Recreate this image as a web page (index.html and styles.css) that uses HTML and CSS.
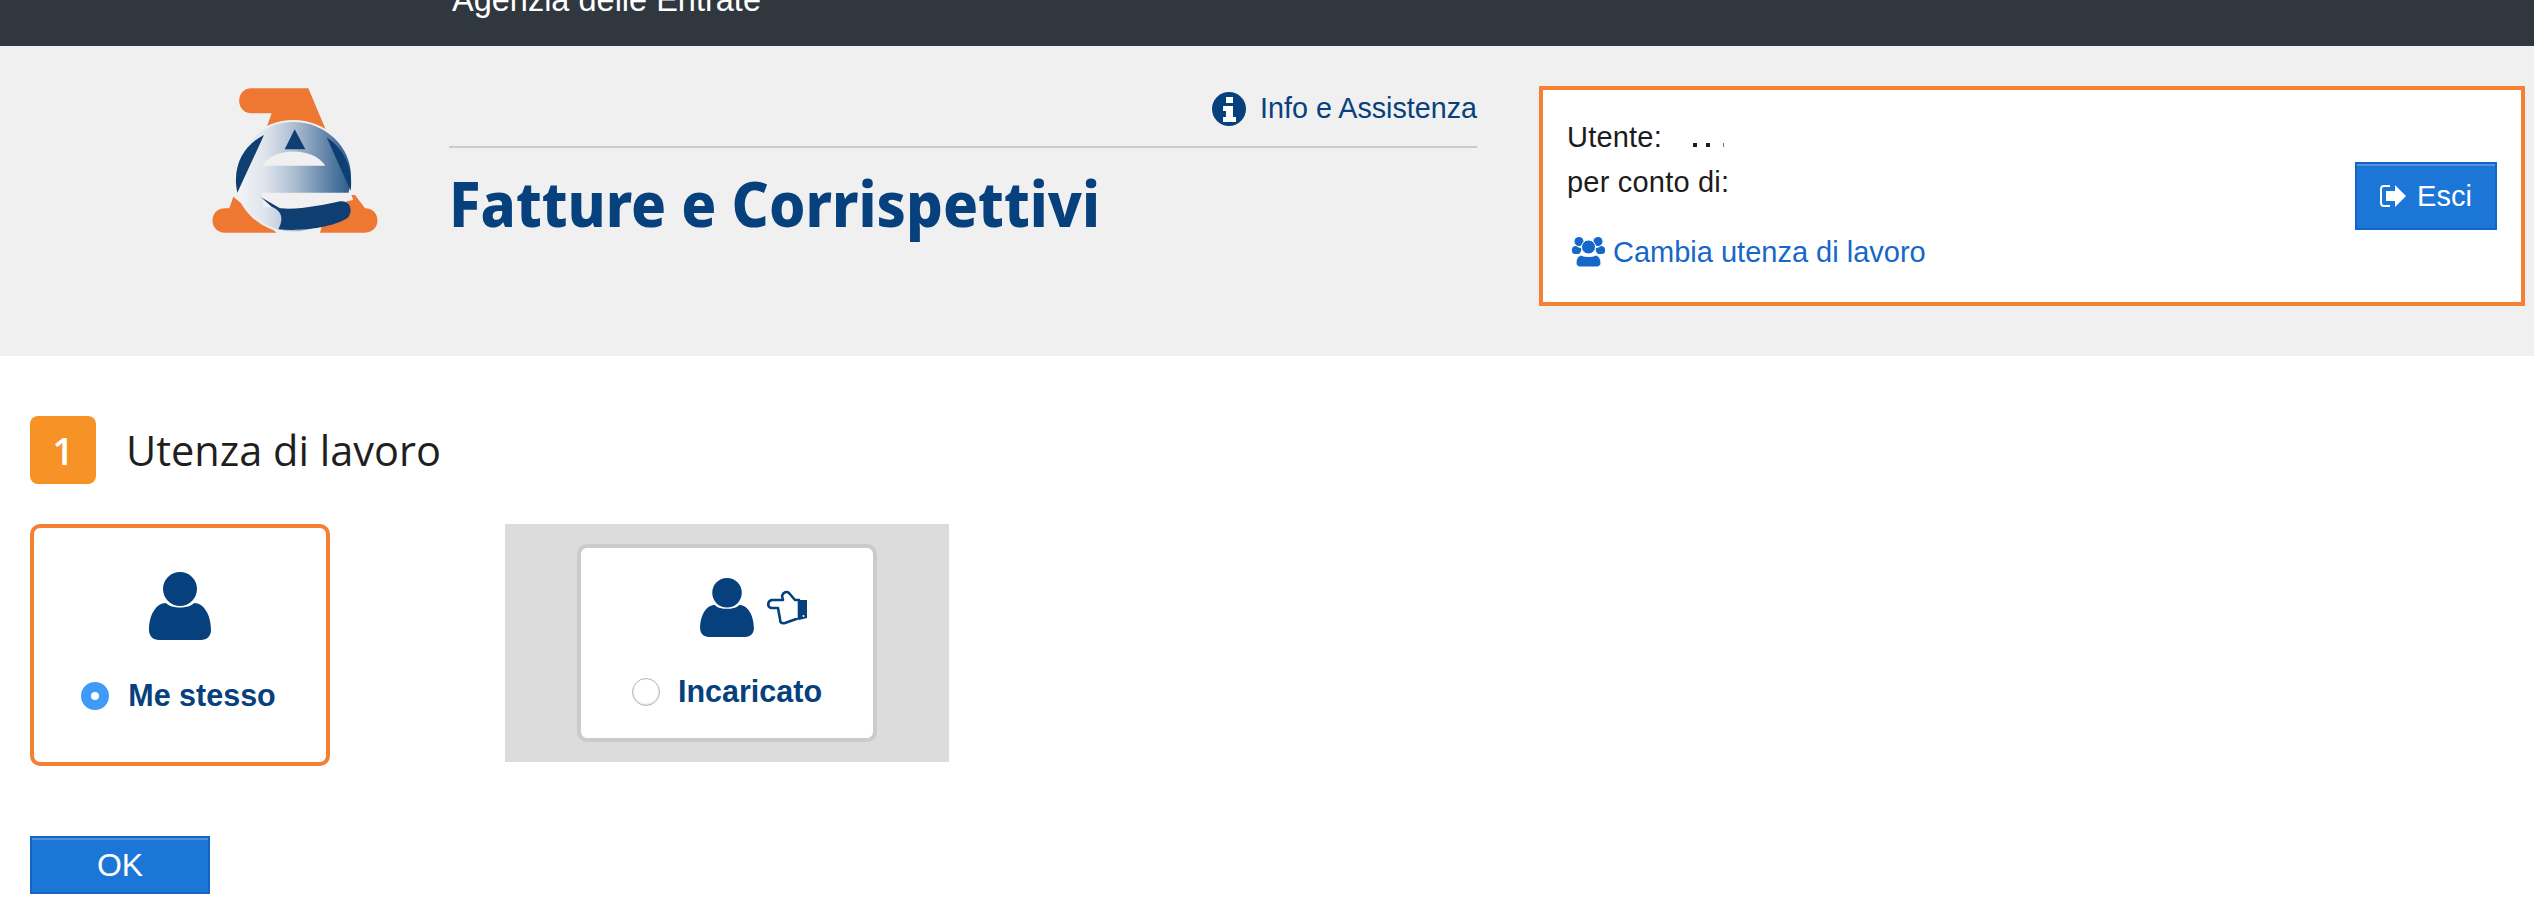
FILE: index.html
```html
<!DOCTYPE html>
<html lang="it">
<head>
<meta charset="utf-8">
<title>Fatture e Corrispettivi</title>
<link rel="stylesheet" href="styles.css">
</head>
<body>
<div class="topbar"><span class="topbar-text">Agenzia delle Entrate</span></div>
<header class="header">
  <svg class="logo" viewBox="0 0 1080 780" aria-label="Agenzia delle Entrate">
    <defs>
      <linearGradient id="lg" x1="0" x2="1" y1="0" y2="0">
        <stop offset="0" stop-color="#f4f5f8"/>
        <stop offset=".25" stop-color="#dfe5ec"/>
        <stop offset=".5" stop-color="#aebfd2"/>
        <stop offset=".75" stop-color="#6c8bae"/>
        <stop offset="1" stop-color="#2b5d8e"/>
      </linearGradient>
    </defs>
    <path fill="#ee7732" d="M215 265H385L440 395H255L275 340H215C165 340 165 265 215 265Z"/>
    <path fill="#ee7732" d="M160 590L290 698H135C85 698 85 625 135 625H148Z"/>
    <path fill="#ee7732" d="M450 585H525L555 625C605 625 605 698 555 698H420Z"/>
    <ellipse cx="340" cy="530" rx="178" ry="170" fill="#f0f0f0"/>
    <ellipse cx="340" cy="530" rx="173" ry="164" fill="url(#lg)"/>
    <path fill="#0e3e72" d="M252 405L172 578C155 500 190 435 252 405Z"/>
    <path fill="#0e3e72" d="M440 412C495 450 520 510 512 572Z"/>
    <path fill="#0e3e72" d="M344 388L376 448H314Z"/>
    <path fill="#f0f0f0" d="M246 497C280 440 400 440 436 497Z"/>
    <path fill="#f0f0f0" d="M245 578H512L520 600L360 630L250 620Z"/>
    <path fill="#0e3e72" d="M243 592L300 625C360 630 430 615 480 604C510 600 520 630 505 652C470 680 370 695 295 688C315 650 300 630 275 620Z"/>
  </svg>
  <div class="brand">
    <div class="info-row">
      <a class="info-link">
        <svg class="info-icon" viewBox="0 0 34 34"><circle cx="17" cy="17" r="17" fill="#06417e"/><rect x="14" y="5" width="7" height="6" fill="#fff"/><path fill="#fff" d="M11 14H21V25H24V30H11V25H14V19H11Z"/></svg>
        <span>Info e Assistenza</span>
      </a>
    </div>
    <h1 class="title">Fatture e Corrispettivi</h1>
  </div>
  <aside class="userbox">
    <div class="userinfo">
      <div class="user-line">Utente:<span class="specks"><i class="speck"></i><i class="speck"></i><i class="speck thin"></i></span></div>
      <div class="user-line">per conto di:</div>
      <a class="change-link">
        <svg class="users-icon" viewBox="0 0 33 30"><g fill="#1567c9"><circle cx="7" cy="4.500" r="4.500"/><circle cx="26" cy="4.500" r="4.500"/><path d="M0 12C0 10 2 9 4 9C6 10 7 11 9 11C10 13 9 15 7 17H3C1 17 0 16 0 14Z"/><path d="M33 12C33 10 31 9 29 9C27 10 26 11 24 11C23 13 24 15 26 17H30C32 17 33 16 33 14Z"/><circle cx="16.500" cy="10" r="7" stroke="#fff" stroke-width="1"/><path stroke="#fff" stroke-width="1" d="M9 18C12 20 21 20 24 18C27 19 29 22 29 26C29 28 27 30 25 30H8C6 30 4 28 4 26C4 22 6 19 9 18Z"/></g></svg>
        <span>Cambia utenza di lavoro</span>
      </a>
    </div>
    <button class="btn btn-esci">
      <svg class="exit-icon" viewBox="0 0 26 22"><path fill="none" stroke="#fff" stroke-width="2" d="M10 1H4C2 1 1 2.500 1 4V18C1 19.500 2 21 4 21H10"/><path fill="#fff" d="M15 0L26 11L15 22V16H6V6H15Z"/></svg>
      <span>Esci</span>
    </button>
  </aside>
</header>
<main class="main">
  <div class="section-head">
    <span class="badge">1</span>
    <h2 class="section-title">Utenza di lavoro</h2>
  </div>
  <div class="choices">
    <div class="choice selected">
      <svg class="person" viewBox="0 0 62 68"><g fill="#06417e"><circle cx="31" cy="17" r="17"/><path d="M17 31C22 37 40 37 45 31C55 31 62 43 62 58C62 64 58 68 52 68H10C4 68 0 64 0 58C0 43 7 31 17 31Z"/></g></svg>
      <div class="choice-label"><span class="radio on"></span><span>Me stesso</span></div>
    </div>
    <div class="disabled-wrap">
      <div class="choice inner">
        <div class="icons">
          <svg class="person small" viewBox="0 0 62 68"><g fill="#06417e"><circle cx="31" cy="17" r="17"/><path d="M17 31C22 37 40 37 45 31C55 31 62 43 62 58C62 64 58 68 52 68H10C4 68 0 64 0 58C0 43 7 31 17 31Z"/></g></svg>
          <svg class="hand" viewBox="0 0 40 35"><path fill="none" stroke="#06417e" stroke-width="2.600" stroke-linejoin="round" stroke-linecap="round" d="M5 10H16L15 6C16 2 20 1 22 3L28 10H32V28L18 33C14 34 13 32 13 29L11 18H5C0 18 0 11 5 10Z"/><path fill="#06417e" d="M32 10H40V28L32 30Z"/><circle cx="36.500" cy="26" r="1" fill="#fff"/></svg>
        </div>
        <div class="choice-label"><span class="radio"></span><span>Incaricato</span></div>
      </div>
    </div>
  </div>
  <button class="btn btn-ok">OK</button>
</main>
</body>
</html>
```

FILE: styles.css
```css
* { box-sizing: border-box; }
html, body { margin: 0; padding: 0; background: #fff; }
body {
  width: 2534px;
  height: 914px;
  overflow: hidden;
  font-family: "Liberation Sans", Arial, sans-serif;
  font-size: 29px;
  color: #1c1c1c;
}
.topbar {
  height: 46px;
  background: #30373f;
  padding-left: 452px;
  overflow: hidden;
}
.topbar-text {
  display: block;
  margin-top: -20px;
  color: #fff;
  font-size: 32.500px;
  line-height: 40px;
}
.header {
  height: 310px;
  background: #f0f0f0;
  display: flex;
  align-items: flex-start;
}
.logo {
  width: 360px;
  height: 260px;
  margin: -46px 0 0 180px;
  flex: none;
}
.brand {
  width: 1028px;
  margin: 0 0 0 -91px;
  flex: none;
}
.info-row {
  height: 102px;
  border-bottom: 2px solid #cbcbcb;
  display: flex;
  justify-content: flex-end;
  padding-top: 46px;
}
.info-link {
  display: flex;
  align-items: center;
  gap: 14px;
  height: 34px;
  color: #06417e;
  font-size: 28.700px;
}
.info-link span { margin-top: -2px; }
.info-icon { width: 34px; height: 34px; }
.title {
  margin: 18px 0 0;
  font-family: "Noto Sans", sans-serif;
  font-size: 63px;
  line-height: 74px;
  font-weight: 800;
  color: #06417e;
  transform: scaleX(.92);
  transform-origin: left center;
  white-space: nowrap;
}
.userbox {
  width: 986px;
  height: 220px;
  margin: 40px 0 0 62px;
  flex: none;
  background: #fff;
  border: 4px solid #f58034;
  display: flex;
  align-items: center;
  justify-content: space-between;
  padding: 0 24px 0 24px;
}
.userinfo { display: flex; flex-direction: column; margin-top: -9px; }
.user-line { line-height: 45px; white-space: nowrap; letter-spacing: .2px; }
.specks {
  display: inline-flex;
  align-items: flex-end;
  gap: 9px;
  margin-left: 31px;
  height: 4px;
}
.speck { width: 4px; height: 4px; background: #1c1c1c; }
.speck.thin { width: 1px; margin-left: 4px; background: #777; }
.change-link {
  display: flex;
  align-items: center;
  gap: 8px;
  margin-top: 31px;
  padding-left: 5px;
  color: #1567c9;
  line-height: 32px;
}
.users-icon { width: 33px; height: 30px; }
.btn {
  display: flex;
  align-items: center;
  justify-content: center;
  font-family: "Liberation Sans", Arial, sans-serif;
  color: #fff;
  background: #1b76d8;
  border: 2px solid #1466c4;
  box-shadow: inset 0 2px 0 #4f94e2;
  padding: 0;
  border-radius: 0;
}
.btn-esci {
  width: 142px;
  height: 68px;
  gap: 11px;
  font-size: 29px;
}
.exit-icon { width: 26px; height: 22px; }
.main { padding: 60px 30px 0; }
.section-head { display: flex; align-items: center; gap: 30px; height: 68px; }
.badge {
  width: 66px;
  height: 68px;
  background: #f79226;
  border-radius: 8px;
  color: #fff;
  font-family: "Open Sans", sans-serif;
  font-size: 38px;
  font-weight: 600;
  display: flex;
  align-items: center;
  justify-content: center;
}
.section-title {
  margin: 0;
  font-family: "Open Sans", sans-serif;
  font-size: 41.500px;
  font-weight: 500;
  color: #1f1f22;
}
.choices { display: flex; gap: 175px; margin-top: 40px; align-items: flex-start; }
.choice {
  width: 300px;
  height: 242px;
  background: #fff;
  border: 4px solid #cbcbcb;
  border-radius: 10px;
  display: flex;
  flex-direction: column;
  align-items: center;
}
.choice.selected { border-color: #f58034; padding-top: 44px; }
.person { width: 62px; height: 68px; }
.choice-label {
  display: flex;
  align-items: center;
  gap: 19px;
  margin-top: 38px;
  font-weight: 700;
  font-size: 30.500px;
  color: #06417e;
}
.selected .choice-label { margin-right: 3px; }
.radio {
  width: 28px;
  height: 28px;
  border-radius: 50%;
  border: 1px solid #b5b5b5;
  background: #fff;
  box-shadow: inset 0 -1px 2px #ddd;
  flex: none;
}
.radio.on {
  border: 10px solid #3f9bf7;
  box-shadow: none;
}
.disabled-wrap {
  width: 444px;
  height: 238px;
  background: #dcdcdc;
  padding: 20px 72px 0;
}
.choice.inner { height: 198px; padding-top: 30px; }
.icons { display: flex; align-items: center; gap: 13px; margin-left: 66px; width: 120px; }
.person.small { width: 54px; height: 59px; flex: none; }
.hand { width: 40px; height: 35px; flex: none; }
.inner .choice-label { margin-top: 37px; gap: 18px; }
.btn-ok {
  width: 180px;
  height: 58px;
  margin-top: 70px;
  font-size: 32px;
}
```
